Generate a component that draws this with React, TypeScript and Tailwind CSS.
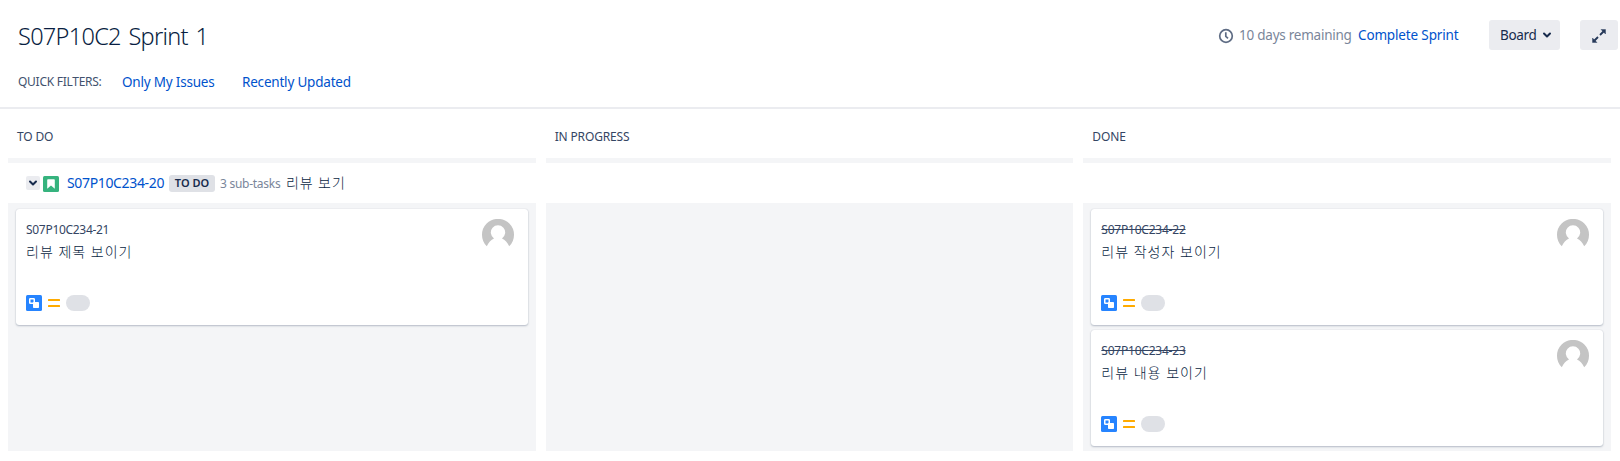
import React from "react";

type Issue = { id: string; title: string; done?: boolean };

const todo: Issue[] = [{ id: "S07P10C234-21", title: "리뷰 제목 보이기" }];
const done: Issue[] = [
  { id: "S07P10C234-22", title: "리뷰 작성자 보이기", done: true },
  { id: "S07P10C234-23", title: "리뷰 내용 보이기", done: true },
];

function SubtaskIcon() {
  return (
    <svg width="16" height="16" viewBox="0 0 16 16" className="shrink-0">
      <rect width="16" height="16" rx="1.5" fill="#2684ff" />
      <rect x="3.75" y="3.75" width="4.5" height="4.5" rx="0.6" fill="none" stroke="#fff" strokeWidth="1.5" />
      <rect x="7" y="7" width="6" height="6" rx="0.8" fill="#fff" />
    </svg>
  );
}

function PriorityIcon() {
  return (
    <svg width="12" height="16" viewBox="0 0 12 16" className="shrink-0">
      <rect y="3.9" width="12" height="2.2" rx="0.5" fill="#ffab00" />
      <rect y="9.9" width="12" height="2.2" rx="0.5" fill="#ffab00" />
    </svg>
  );
}

function Avatar() {
  return (
    <svg width="32" height="32" viewBox="0 0 32 32" className="shrink-0">
      <path
        d="M4.800 27.300A16 16 0 1 1 27.200 27.300C25.600 23.500 23 20.500 20 19.400A7.200 7.200 0 1 0 12 19.400C9 20.500 6.400 23.500 4.800 27.300Z"
        fill="#c4c4c4"
      />
    </svg>
  );
}

function Card({ issue }: { issue: Issue }) {
  return (
    <article className="flex h-[116px] justify-between rounded-[3px] bg-white pt-[10px] pr-[14px] pb-[14px] pl-[10px] shadow-[0_1px_2px_rgba(9,30,66,0.25),0_0_1px_rgba(9,30,66,0.2)]">
      <div className="flex flex-col">
        <span
          className={
            issue.done
              ? "h-[22px] text-[12px] leading-[22px] tracking-[-0.22px] text-[#344563] line-through"
              : "h-[22px] text-[12px] leading-[22px] tracking-[-0.3px] text-[#344563]"
          }
        >
          {issue.id}
        </span>
        <span className="h-5 text-[14px] leading-[21px] font-light tracking-[1px] text-[#091e42]">{issue.title}</span>
        <div className="mt-auto flex items-center gap-1.5">
          <SubtaskIcon />
          <PriorityIcon />
          <span className="h-4 w-6 rounded-full bg-[#dfe1e6]" />
        </div>
      </div>
      <Avatar />
    </article>
  );
}

function Column({ issues }: { issues: Issue[] }) {
  return (
    <div className="flex h-[248px] flex-col gap-[5px] bg-[#f4f5f7] px-2 pt-1.5">
      {issues.map((i) => (
        <Card key={i.id} issue={i} />
      ))}
    </div>
  );
}

export default function App() {
  return (
    <div className="h-[461px] w-full overflow-hidden whitespace-nowrap bg-white font-['Noto_Sans','Noto_Sans_CJK_KR',sans-serif] text-[13.5px] text-[#172b4d]">
      <header className="flex h-[109px] flex-col border-b-2 border-[#ebecf0]">
        <div className="flex h-[62px] justify-between pt-5 pr-0.5 pl-[18px]">
          <h1 className="text-[23.5px] leading-[33px] font-light tracking-[-0.7px] [word-spacing:2.2px] text-[#091e42]">S07P10C2 Sprint 1</h1>
          <div className="flex h-[30px] items-center">
            <svg width="16" height="16" viewBox="0 0 16 16" className="mt-px mr-[5px]" fill="none" stroke="#5e6c84" strokeWidth="1.7">
              <circle cx="8" cy="8" r="6.300" />
              <path d="M7.800 4.200V8.300L10 10.300" />
            </svg>
            <span className="w-[119px] tracking-[-0.24px] text-[#7a869a]">10 days remaining</span>
            <a className="w-[131px] tracking-[-0.15px] text-[#0052cc]">Complete Sprint</a>
            <button className="flex h-[30px] w-[71px] items-center rounded-[3px] bg-[#ebecf0] pl-[11px] text-[#172b4d]">
              <span className="w-[42px] text-left tracking-[-0.3px]">Board</span>
              <svg width="10" height="10" viewBox="0 0 10 10" fill="none" stroke="#172b4d" strokeWidth="2" strokeLinecap="round" strokeLinejoin="round">
                <path d="M2 3.500L5 6.500L8 3.500" />
              </svg>
            </button>
            <button className="ml-5 flex h-[30px] w-[38px] items-center justify-center rounded-[3px] bg-[#ebecf0]">
              <svg width="16" height="16" viewBox="0 0 16 16" className="mt-0.5" fill="#253858" stroke="#253858">
                <path d="M10 1.500H14.500V6Z M1.500 10V14.500H6Z" strokeWidth="0.4" />
                <path d="M9 7L12.500 3.500M7 9L3.500 12.500" strokeWidth="1.8" />
              </svg>
            </button>
          </div>
        </div>
        <div className="flex h-10 items-center pl-[18px]">
          <span className="w-[104px] text-[12px] tracking-[-0.27px] text-[#42526e]">QUICK FILTERS:</span>
          <a className="w-[120px] tracking-[-0.2px] text-[#0052cc]">Only My Issues</a>
          <a className="tracking-[-0.2px] text-[#0052cc]">Recently Updated</a>
        </div>
      </header>

      <main className="pr-[9px] pl-2">
        <div className="grid h-[54px] grid-cols-3 gap-x-[10px]">
          {["TO DO", "IN PROGRESS", "DONE"].map((name) => (
            <h2 key={name} className="border-b-[5px] border-[#f4f5f7] pt-[7px] pl-[9px] text-[12px] leading-[42px] tracking-[-0.15px] text-[#344563]">
              {name}
            </h2>
          ))}
        </div>
        <div className="flex h-10 items-center pl-[18px]">
          <button className="mr-[3px] flex h-3.5 w-3.5 items-center justify-center rounded-[2px] bg-[#ebecf0]">
            <svg width="10" height="10" viewBox="0 0 10 10" fill="none" stroke="#172b4d" strokeWidth="2" strokeLinecap="round" strokeLinejoin="round">
              <path d="M2 3.500L5 6.500L8 3.500" />
            </svg>
          </button>
          <svg width="16" height="16" viewBox="0 0 16 16" className="mt-0.5 mr-2">
            <rect width="16" height="16" rx="1.500" fill="#36b37e" />
            <path d="M4.200 4Q4.200 3.200 5 3.200H11Q11.800 3.200 11.800 4V12.800L8 9.500L4.200 12.800Z" fill="#fff" />
          </svg>
          <a className="mb-0.5 w-[102px] text-[14px] tracking-[-0.35px] text-[#0052cc]">S07P10C234-20</a>
          <span className="flex h-[17px] w-[46px] items-center justify-center rounded-[3px] bg-[#dfe1e6] text-[11px] font-semibold text-[#172b4d]">TO DO</span>
          <span className="mt-0.5 ml-[5px] w-[66px] text-[12px] tracking-[-0.27px] text-[#7a869a]">3 sub-tasks</span>
          <span className="mb-0.5 text-[14px] font-light tracking-[0.9px] text-[#091e42]">리뷰 보기</span>
        </div>
        <div className="grid grid-cols-3 gap-x-[10px]">
          <Column issues={todo} />
          <Column issues={[]} />
          <Column issues={done} />
        </div>
      </main>
    </div>
  );
}
